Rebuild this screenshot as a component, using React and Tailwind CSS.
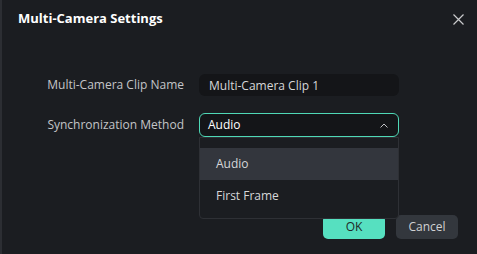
import { useState } from "react";

export default function App() {
  const [method, setMethod] = useState("Audio");
  const [name, setName] = useState("Multi-Camera Clip 1");

  return (
    <div
      className="relative w-[477px] h-[254px] overflow-hidden bg-[#1b1d21] border-l-2 border-[#2c2e33] text-[#d6d7d9]"
      style={{ fontFamily: '"Open Sans", "Noto Sans", sans-serif' }}
    >
      {/* header */}
      <div className="flex items-center justify-between h-[38px] pl-[16px] pr-[8px]">
        <h1 className="text-[13px] font-bold text-white">Multi-Camera Settings</h1>
        <button className="w-[22px] h-[22px] flex items-center justify-center text-[#c9cacc]">
          <svg width="11" height="11" viewBox="0 0 11 11" fill="none" stroke="currentColor" strokeWidth="1.2">
            <path d="M0.5 0.5 L10.5 10.5 M10.5 0.5 L0.5 10.5" />
          </svg>
        </button>
      </div>

      {/* form */}
      <div className="mt-[36px] flex flex-col gap-[17px]">
        <div className="flex items-center">
          <label className="w-[197px] pr-[15px] text-right text-[12px] text-[#c4c5c8]">
            Multi-Camera Clip Name
          </label>
          <input
            value={name}
            onChange={(e) => setName(e.target.value)}
            className="w-[200px] h-[22px] px-[10px] rounded-[6px] bg-[#141518] text-[12px] text-[#d6d7d9] outline-none"
          />
        </div>

        <div className="flex items-center">
          <label className="w-[197px] pr-[15px] text-right text-[12px] text-[#c4c5c8]">
            Synchronization Method
          </label>
          <div className="relative w-[200px]">
            <button className="w-full h-[24px] flex items-center justify-between pl-[8px] pr-[10px] rounded-[6px] border border-[#4fd8b6] bg-[#141518] text-[12px] text-white">
              <span>{method}</span>
              <svg width="8" height="5" viewBox="0 0 8 5" fill="none" stroke="#bfc0c3" strokeWidth="1">
                <path d="M0.5 4.5 L4 1 L7.5 4.5" />
              </svg>
            </button>

            {/* menu */}
            <div className="absolute left-0 top-[24px] w-[200px] h-[82px] pt-[10px] rounded-b-[4px] border border-[#2e3035] bg-[#1b1d21] z-10">
              {["Audio", "First Frame"].map((m) => (
                <div
                  key={m}
                  onClick={() => setMethod(m)}
                  className={
                    "h-[32px] flex items-center pl-[16px] text-[12px] text-[#d6d7d9] " +
                    (m === method ? "bg-[#33363d]" : "")
                  }
                >
                  {m}
                </div>
              ))}
            </div>
          </div>
        </div>
      </div>

      {/* footer */}
      <div className="absolute right-[19px] bottom-[15px] flex gap-[11px]">
        <button className="w-[62px] h-[24px] rounded-[5px] bg-[#56e0c0] text-[12px] text-[#1e2a27]">
          OK
        </button>
        <button className="w-[62px] h-[24px] rounded-[5px] bg-[#33373d] text-[12px] text-[#d0d1d3]">
          Cancel
        </button>
      </div>
    </div>
  );
}
